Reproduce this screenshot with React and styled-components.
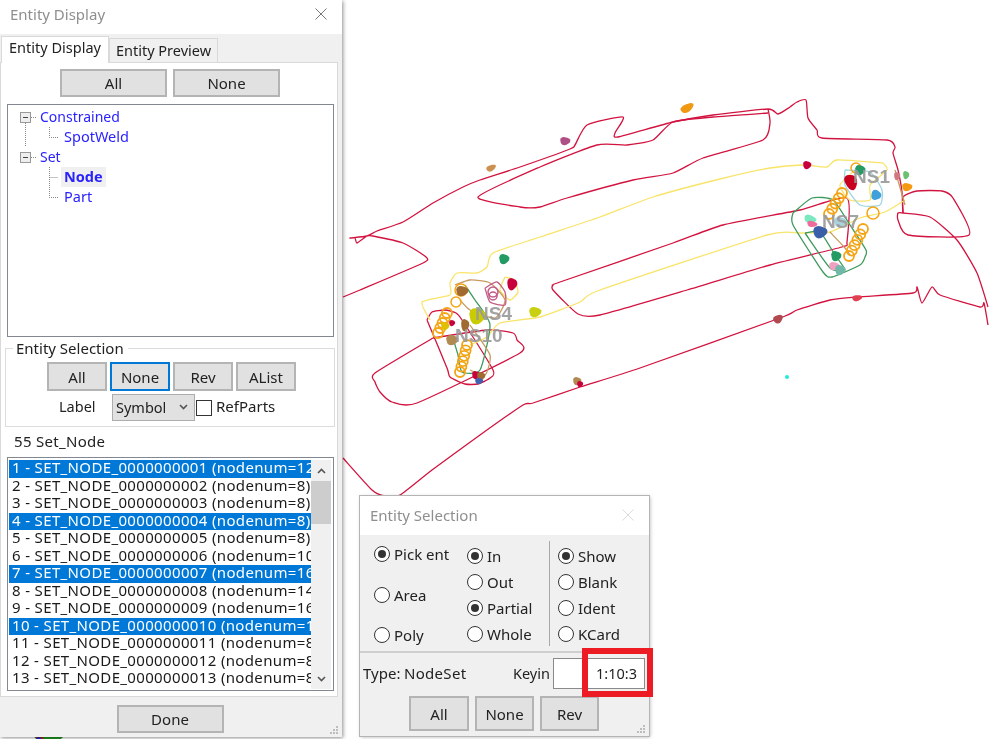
import React from 'react'
import styled, { createGlobalStyle } from 'styled-components'

const GlobalStyle = createGlobalStyle`
  html, body { margin: 0; padding: 0; background: #fff; }
  body { font-family: "Noto Sans", "Open Sans", sans-serif; font-size: 15px; color: #222; }
  * { box-sizing: border-box; }
`

const Page = styled.div`
  position: relative;
  width: 998px;
  height: 739px;
  overflow: hidden;
  background: #fff;
  filter: blur(0.3px);
`

const Scene = styled.svg`
  position: absolute;
  left: 0;
  top: 0;
  width: 998px;
  height: 739px;
`

const Window = styled.div`
  position: absolute;
  display: flex;
  flex-direction: column;
  background: #f0f0f0;
`

const DisplayWindow = styled(Window)`
  left: 0;
  top: 0;
  width: 342px;
  height: 737px;
  box-shadow: 1px 1px 4px rgba(0, 0, 0, 0.45);
`

const SelectionWindow = styled(Window)`
  left: 360px;
  top: 496px;
  width: 289px;
  height: 240px;
  box-shadow: 0 0 0 1px #b4b4b4, 1px 1px 4px rgba(0, 0, 0, 0.3);
`

const TitleBar = styled.div`
  flex: none;
  display: flex;
  align-items: center;
  justify-content: space-between;
  height: ${p => p.$height}px;
  padding: 0 15px ${p => p.$lift || 0}px 10px;
  background: #fff;
  color: #8f8f8f;
  font-size: 15px;
`

const Tabs = styled.div`
  flex: none;
  display: flex;
  align-items: flex-end;
  height: 28px;
  padding-left: 1px;
`

const Tab = styled.div`
  display: flex;
  align-items: center;
  justify-content: center;
  width: ${p => (p.$active ? 108 : 109)}px;
  height: ${p => (p.$active ? 27 : 24)}px;
  margin-bottom: ${p => (p.$active ? -1 : 0)}px;
  padding-bottom: ${p => (p.$active ? 7 : 2)}px;
  background: ${p => (p.$active ? '#fff' : '#f0f0f0')};
  border: 1px solid #d9d9d9;
  border-bottom: none;
  font-size: 14.5px;
  position: relative;
  z-index: ${p => (p.$active ? 1 : 0)};
`

const TabPanel = styled.div`
  flex: none;
  display: flex;
  flex-direction: column;
  width: 338px;
  height: 635px;
  padding: 6px 4px 0 6px;
  background: #fff;
  border: 1px solid #d9d9d9;
`

const ButtonRow = styled.div`
  display: flex;
  justify-content: center;
  gap: ${p => p.$gap}px;
`

const Button = styled.div`
  display: flex;
  align-items: center;
  justify-content: center;
  flex: none;
  width: ${p => p.$w}px;
  height: ${p => p.$h}px;
  background: #e1e1e1;
  border: 2px solid ${p => (p.$focus ? '#0078d7' : '#b4b4b4')};
  font-size: 15px;
`

const TreeBox = styled.div`
  flex: none;
  width: 327px;
  height: 233px;
  margin-top: 7px;
  padding: 2px 0 0 1px;
  background: #fff;
  border: 1px solid #828790;
`

const TreeRow = styled.div`
  display: flex;
  align-items: center;
  height: 20px;
  color: #2a22ff;
`

const TreeGuide = styled.svg`
  flex: none;
  display: block;
`

const TreeLabel = styled.span`
  padding: 0 3px;
  margin-left: ${p => (p.$root ? 0 : 3)}px;
  height: 20px;
  line-height: 19px;
  font-size: ${p => (p.$root ? 14 : 14.5)}px;
  font-weight: ${p => (p.$selected ? 700 : 400)};
  background: ${p => (p.$selected ? '#f0f0f0' : 'transparent')};
`

const Group = styled.fieldset`
  flex: none;
  width: 330px;
  height: 89px;
  margin: 1px 0 0 -2px;
  padding: 0 0 0 41px;
  border: 1px solid #dcdcdc;
  min-width: 0;
`

const GroupTitle = styled.legend`
  margin-left: -34px;
  padding: 0 4px 0 3px;
  line-height: 20px;
  font-size: 15px;
`

const SelectionRow = styled.div`
  display: flex;
  align-items: center;
  gap: ${p => p.$gap}px;
  margin-top: ${p => p.$top}px;
`

const FieldLabel = styled.span`
  width: 61px;
  padding: 0 0 3px 12px;
  font-size: 14.5px;
`

const RefLabel = styled.span`
  padding-bottom: 3px;
`

const Dropdown = styled.div`
  display: flex;
  align-items: center;
  justify-content: space-between;
  width: 83px;
  height: 27px;
  padding: 0 6px 1px 3px;
  background: #e1e1e1;
  border: 1px solid #adadad;
  font-size: 14.5px;
`

const CheckBox = styled.span`
  display: block;
  flex: none;
  width: 16px;
  height: 16px;
  margin-left: -3px;
  background: #fff;
  border: 1px solid #333;
`

const SetCount = styled.div`
  flex: none;
  height: 20px;
  margin-top: 4px;
  padding-left: 7px;
  line-height: 20px;
  font-size: 15px;
  letter-spacing: 0.3px;
`

const ListBox = styled.div`
  flex: none;
  display: flex;
  width: 327px;
  height: 234px;
  margin-top: 6px;
  padding: 2px 2px 0 1px;
  background: #fff;
  border: 1px solid #828790;
`

const Items = styled.div`
  flex: none;
  width: 302px;
  overflow: hidden;
`

const Item = styled.div`
  height: 17.5px;
  padding-left: 3px;
  line-height: 15px;
  white-space: nowrap;
  overflow: hidden;
  font-size: 15px;
  letter-spacing: 0.35px;
  background: ${p => (p.$selected ? '#0078d7' : 'transparent')};
  color: ${p => (p.$selected ? '#fff' : '#1a1a1a')};
`

const ScrollBar = styled.div`
  flex: none;
  display: flex;
  flex-direction: column;
  align-items: center;
  width: 20px;
  height: 229px;
  background: #f0f0f0;
`

const ScrollButton = styled.div`
  flex: none;
  display: flex;
  align-items: center;
  justify-content: center;
  width: 100%;
  height: ${p => p.$h}px;
`

const ScrollThumb = styled.div`
  flex: none;
  width: 100%;
  height: 43px;
  background: #cdcdcd;
`

const ScrollTrack = styled.div`
  flex: 1;
`

const Footer = styled.div`
  position: relative;
  flex: 1;
  display: flex;
  justify-content: center;
  padding: 8px 2px 0 0;
`

const Grip = styled.svg`
  position: absolute;
  right: 3px;
  bottom: 2px;
`

const Options = styled.div`
  flex: none;
  display: flex;
  height: 119px;
  border-top: 1px solid #fff;
  border-bottom: 2px solid #cfcfcf;
`

const OptionColumn = styled.div`
  display: flex;
  flex-direction: column;
  flex: none;
  width: ${p => p.$w}px;
  padding: ${p => p.$pad};
  justify-content: ${p => p.$justify || 'flex-start'};
  gap: ${p => p.$gap || 0}px;
  border-left: ${p => (p.$divider ? '1px solid #a8a8a8' : 'none')};
  margin: ${p => (p.$divider ? '6px 0 5px' : '0')};
`

const Option = styled.div`
  display: flex;
  align-items: center;
  gap: 4px;
  height: 20px;
  font-size: 15px;
`

const Radio = styled.span`
  display: flex;
  align-items: center;
  justify-content: center;
  flex: none;
  width: 16px;
  height: 16px;
  background: #fff;
  border: 1px solid #333;
  border-radius: 50%;
  &::after {
    content: '';
    display: ${p => (p.$on ? 'block' : 'none')};
    width: 8px;
    height: 8px;
    border-radius: 50%;
    background: #333;
  }
`

const KeyRow = styled.div`
  flex: none;
  display: flex;
  align-items: center;
  height: 37px;
  padding: 3px 3px 0 3px;
  font-size: 14.5px;
`

const TypeLabel = styled.span`
  width: 41px;
  font-size: 15px;
`

const TypeValue = styled.span`
  width: 109px;
  font-size: 15px;
  letter-spacing: 0.3px;
`

const KeyinInput = styled.div`
  width: 92px;
  height: 31px;
  margin-left: 3px;
  padding-right: 7px;
  line-height: 29px;
  text-align: right;
  background: #fff;
  border: 1px solid #8a8a8a;
`

const Highlight = styled.div`
  position: absolute;
  left: 222px;
  top: 152px;
  width: 71px;
  height: 49px;
  border: 6px solid #ed1c24;
`

const BottomButtons = styled.div`
  flex: none;
  display: flex;
  gap: 6px;
  padding: 6px 0 0 49px;
`

const treeRows = [
  { label: 'Constrained', guide: 'rootFirst' },
  { label: 'SpotWeld', guide: 'childOfFirst' },
  { label: 'Set', guide: 'rootLast' },
  { label: 'Node', guide: 'childFirst', selected: true },
  { label: 'Part', guide: 'childLast' },
]

const selected = [1, 4, 7, 10]
const nodeCounts = [12, 8, 8, 8, 8, 10, 16, 14, 16, 12, 8, 8, 8]

const Expander = () => (
  <g>
    <rect x="11.5" y="5.5" width="10" height="10" fill="#eee" stroke="#999" />
    <path d="M14 10.5h5" stroke="#444" />
    <path d="M22 10.5h6" stroke="#888" strokeDasharray="1 1" />
  </g>
)

// the dotted connector lines of the tree, one small drawing per row
const Guide = ({ kind }) => {
  const root = kind === 'rootFirst' || kind === 'rootLast'
  return (
    <TreeGuide width={root ? 28 : 49} height="20">
      {root && <Expander />}
      {kind === 'rootFirst' && <path d="M16.5 16v4" stroke="#888" strokeDasharray="1 1" />}
      {kind === 'childOfFirst' && (
        <path d="M16.5 0v20M40.5 0v10.5h10" fill="none" stroke="#888" strokeDasharray="1 1" />
      )}
      {kind === 'childFirst' && (
        <path d="M40.5 0v20M40.5 10.5h10" fill="none" stroke="#888" strokeDasharray="1 1" />
      )}
      {kind === 'childLast' && (
        <path d="M40.5 0v10.5h10" fill="none" stroke="#888" strokeDasharray="1 1" />
      )}
    </TreeGuide>
  )
}

const Close = ({ color, size }) => (
  <svg width={size} height={size} viewBox="0 0 12 12">
    <path d="M0.5 0.5l11 11M11.5 0.5l-11 11" stroke={color} fill="none" />
  </svg>
)

const Chevron = ({ up, color = '#555', w = 9 }) => (
  <svg width={w} height="6" viewBox="0 0 9 6">
    <path d={up ? 'M1 5l3.5-3.5L8 5' : 'M1 1l3.5 3.5L8 1'} stroke={color} strokeWidth="1.6" fill="none" />
  </svg>
)

const GripDots = () => (
  <Grip width="10" height="10" viewBox="0 0 10 10">
    <path d="M7 1h2v2H7zM4 4h2v2H4zM7 4h2v2H7zM1 7h2v2H1zM4 7h2v2H4zM7 7h2v2H7z" fill="#bdbdbd" />
  </Grip>
)

const RED = '#d2133f'
const YELLOW = '#f9e46a'
const GREEN = '#3c9a5c'
const TAN = '#c89a60'
const PURPLE = '#c45a86'
const ORANGE = '#f4a516'

// outlines of the model, as flat x y lists
const lines = [
  [RED, [343, 297, 360, 290, 423, 263, 426, 257, 403, 243, 373, 236, 367, 236, 357, 243, 355, 238, 350, 238, 367, 236, 377, 231, 403, 222, 433, 203, 463, 187, 480, 180, 520, 167, 570, 149, 575, 145, 587, 125, 623, 117, 615, 133, 618, 137, 673, 122, 713, 115, 768, 109, 778, 114, 790, 107, 797, 102, 806, 100, 808, 118, 817, 130, 822, 138, 887, 140, 895, 147, 893, 153, 898, 170, 902, 192, 903, 213]],
  [RED, [768, 109, 770, 123, 763, 140, 703, 158, 673, 173, 633, 180, 567, 198, 540, 207, 520, 207, 478, 197, 540, 167, 597, 145, 627, 145, 653, 140, 673, 122, 713, 117, 768, 113]],
  [RED, [553, 285, 560, 282, 673, 243, 723, 225, 800, 210, 847, 198, 847, 242, 842, 247, 770, 265, 687, 290, 600, 315, 578, 314, 553, 290, 553, 285]],
  [RED, [433, 338, 375, 373, 375, 382, 380, 392, 392, 402, 417, 403, 520, 353, 517, 340, 513, 333, 487, 330, 433, 338]],
  [RED, [427, 320, 432, 312, 445, 310, 456, 313, 462, 320, 493, 370, 490, 378, 478, 384, 465, 384, 450, 377, 447, 368, 427, 320]],
  [RED, [343, 458, 372, 490, 385, 496, 400, 495, 432, 470, 480, 435, 523, 405, 533, 403, 580, 387, 640, 368, 780, 318, 797, 310, 830, 300, 857, 297, 913, 293, 917, 287, 922, 303, 932, 287, 940, 295, 980, 307, 984, 303, 988, 325]],
  [RED, [903, 213, 903, 197, 917, 191, 942, 191, 953, 198, 969, 235, 908, 235, 898, 220, 898, 213, 903, 213, 930, 217, 957, 240, 977, 273, 988, 307]],
  [YELLOW, [883, 163, 837, 160, 827, 167, 803, 165, 770, 168, 720, 179, 653, 197, 600, 217, 540, 237, 493, 253, 487, 267, 477, 273, 457, 273, 450, 283, 450, 295, 422, 302, 430, 320]],
  [YELLOW, [905, 200, 885, 212, 860, 218, 830, 232, 800, 233, 767, 235, 600, 290, 580, 302, 540, 317, 500, 323, 487, 337, 470, 345]],
  [YELLOW, [883, 163, 887, 170, 870, 185, 870, 200, 850, 200, 840, 185, 855, 170]],
  [YELLOW, [505, 277, 514, 280, 518, 292, 510, 300, 500, 290, 505, 277]],
  [GREEN, [793, 213, 812, 198, 833, 200, 850, 225, 866, 250, 865, 257, 860, 265, 832, 277, 823, 272, 793, 225, 793, 213]],
  [GREEN, [805, 233, 820, 232, 835, 255, 845, 270, 830, 268, 805, 233]],
  [GREEN, [465, 285, 475, 300, 490, 325, 480, 370, 462, 372, 458, 355, 452, 335]],
  [TAN, [455, 285, 470, 280, 490, 283, 505, 300, 495, 318, 470, 310, 460, 300]],
  [TAN, [470, 325, 490, 355, 485, 375, 470, 370]],
  [TAN, [830, 232, 845, 248, 850, 255]],
  [TAN, [895, 170, 905, 205]],
  [PURPLE, [485, 288, 497, 282, 505, 292, 505, 305, 490, 302, 485, 288]],
  ['#9fd6e2', [845, 170, 870, 172, 882, 190, 880, 205, 860, 205, 845, 185, 845, 170]],
]

const rings = [
  { x: 493, y: 292, r: 5, c: PURPLE },
  { x: 493, y: 296, r: 4, c: PURPLE },
  { x: 456, y: 302, r: 5, c: ORANGE },
  { x: 461, y: 290, r: 6, c: ORANGE },
  { x: 873, y: 213, r: 6, c: ORANGE },
  { x: 856, y: 168, r: 5, c: ORANGE },
]

const chains = [
  [447, 313, 438, 333, 5],
  [467, 345, 460, 372, 6],
  [842, 193, 829, 214, 5],
  [863, 229, 849, 256, 6],
]

const blobs = [
  [687, 108, 7, 4, '#ef9a12', -30],
  [565, 141, 5, 4, '#ae5085', 0],
  [491, 168, 5, 3, '#cc9050', -25],
  [504, 259, 5, 5, '#239b64', 0],
  [512, 284, 5, 6, '#c8003c', 0],
  [462, 291, 6, 5, '#a06a30', 0],
  [477, 316, 8, 8, '#c8cc00', 0],
  [535, 312, 6, 5, '#c8d010', 0],
  [452, 340, 6, 5, '#b08a50', 0],
  [465, 325, 4, 6, '#a06a30', 0],
  [452, 323, 3, 3, '#c8003c', 0],
  [445, 326, 4, 4, '#e0c000', 0],
  [476, 375, 4, 4, '#c8003c', 0],
  [481, 376, 4, 4, '#a06a30', 0],
  [479, 381, 4, 3, '#4060b0', 0],
  [577, 381, 4, 4, '#b08a50', 0],
  [580, 384, 3, 3, '#c8003c', 0],
  [807, 165, 4, 4, '#c8003c', 0],
  [851, 182, 6, 8, '#c8001e', -25],
  [860, 170, 5, 5, '#239b64', 0],
  [876, 195, 5, 5, '#40a0dc', 20],
  [907, 187, 5, 4, '#f59a10', 0],
  [906, 175, 3, 4, '#6cc070', 0],
  [897, 176, 3, 4, '#d07a80', 0],
  [810, 219, 6, 4, '#7ce8c0', 15],
  [812, 224, 5, 3, '#f06a9a', 10],
  [820, 232, 7, 6, '#3a5fa8', 0],
  [840, 222, 6, 5, '#a8d2e0', 0],
  [836, 256, 5, 5, '#239b64', 0],
  [834, 266, 5, 4, '#f0a0c0', 0],
  [840, 270, 5, 5, '#70b8a8', 0],
  [857, 298, 5, 3, '#e04050', -10],
  [778, 319, 5, 4, '#b04a50', -30],
]

const labels = [
  ['NS4', 475, 320],
  ['NS10', 455, 342],
  ['NS1', 853, 183],
  ['NS7', 822, 228],
]

const chainPoints = ([x1, y1, x2, y2, n]) =>
  Array.from({ length: n }, (_, i) => [x1 + ((x2 - x1) * i) / (n - 1), y1 + ((y2 - y1) * i) / (n - 1)])

// light catmull-rom smoothing so the outlines don't look like ruler lines
const smooth = flat => {
  const pts = []
  for (let i = 0; i < flat.length; i += 2) pts.push([flat[i], flat[i + 1]])
  let d = `M${pts[0][0]} ${pts[0][1]}`
  for (let i = 0; i < pts.length - 1; i++) {
    const a = pts[Math.max(i - 1, 0)]
    const b = pts[i]
    const c = pts[i + 1]
    const e = pts[Math.min(i + 2, pts.length - 1)]
    const k = 0.1
    d += `C${b[0] + (c[0] - a[0]) * k} ${b[1] + (c[1] - a[1]) * k} ${c[0] - (e[0] - b[0]) * k} ${c[1] - (e[1] - b[1]) * k} ${c[0]} ${c[1]}`
  }
  return d
}

// ragged little patch of mesh
const blobPoints = (rx, ry) =>
  Array.from({ length: 18 }, (_, i) => {
    const t = (i / 18) * Math.PI * 2
    const m = 1 + 0.09 * Math.cos(t * 3 + 0.6)
    return `${(Math.cos(t) * rx * m).toFixed(1)},${(Math.sin(t) * ry * m).toFixed(1)}`
  }).join(' ')

const Model = () => (
  <Scene viewBox="0 0 998 739">
    {lines.map(([c, pts], i) => (
      <path key={i} d={smooth(pts)} fill="none" stroke={c} strokeWidth="1.3" strokeLinejoin="round" />
    ))}
    {rings.map((r, i) => (
      <circle key={i} cx={r.x} cy={r.y} r={r.r} fill="none" stroke={r.c} strokeWidth="1.5" />
    ))}
    {chains.map((c, i) =>
      chainPoints(c).map(([x, y], j) => (
        <circle key={`${i}-${j}`} cx={x} cy={y} r="5" fill="none" stroke={ORANGE} strokeWidth="1.8" />
      ))
    )}
    {blobs.map(([x, y, rx, ry, c, rot], i) => (
      <polygon key={i} points={blobPoints(rx, ry)} fill={c} transform={`translate(${x} ${y}) rotate(${rot})`} />
    ))}
    <circle cx="787" cy="377" r="2" fill="#25e8e0" />
    {labels.map(([t, x, y]) => (
      <text key={t} x={x} y={y} fill="#9a9a9a" opacity="0.9" fontFamily="Liberation Sans, sans-serif" fontWeight="700" fontSize="19">
        {t}
      </text>
    ))}
    <path d="M33 735l10 0 l6 2 l16-2 l-4 4H36z" fill="#1f9a20" />
    <path d="M30 734l8 5h6l-4-5z" fill="#c81e1e" />
    <path d="M38 736l4 3h-6z" fill="#2030c0" />
  </Scene>
)

const listItems = nodeCounts.map((n, i) => {
  const id = i + 1
  return { id, text: `${id} - SET_NODE_${String(id).padStart(10, '0')} (nodenum=${n})` }
})

const App = () => (
  <Page>
    <GlobalStyle />
    <Model />

    <DisplayWindow>
      <TitleBar $height={34} $lift={6}>
        Entity Display
        <Close color="#777" size={12} />
      </TitleBar>
      <Tabs>
        <Tab $active>Entity Display</Tab>
        <Tab>Entity Preview</Tab>
      </Tabs>
      <TabPanel>
        <ButtonRow $gap={6}>
          <Button $w={107} $h={28}>All</Button>
          <Button $w={107} $h={28}>None</Button>
        </ButtonRow>
        <TreeBox>
          {treeRows.map(r => (
            <TreeRow key={r.label}>
              <Guide kind={r.guide} />
              <TreeLabel $selected={r.selected} $root={r.guide.startsWith('root')}>{r.label}</TreeLabel>
            </TreeRow>
          ))}
        </TreeBox>
        <Group>
          <GroupTitle>Entity Selection</GroupTitle>
          <SelectionRow $gap={3} $top={4}>
            <Button $w={60} $h={29}>All</Button>
            <Button $w={60} $h={29} $focus>None</Button>
            <Button $w={60} $h={29}>Rev</Button>
            <Button $w={60} $h={29}>AList</Button>
          </SelectionRow>
          <SelectionRow $gap={4} $top={3}>
            <FieldLabel>Label</FieldLabel>
            <Dropdown>
              Symbol
              <Chevron />
            </Dropdown>
            <CheckBox />
            <RefLabel>RefParts</RefLabel>
          </SelectionRow>
        </Group>
        <SetCount>55 Set_Node</SetCount>
        <ListBox>
          <Items>
            {listItems.map(item => (
              <Item key={item.id} $selected={selected.includes(item.id)}>{item.text}</Item>
            ))}
          </Items>
          <ScrollBar>
            <ScrollButton $h={21}><Chevron up /></ScrollButton>
            <ScrollThumb />
            <ScrollTrack />
            <ScrollButton $h={21}><Chevron /></ScrollButton>
          </ScrollBar>
        </ListBox>
      </TabPanel>
      <Footer>
        <Button $w={107} $h={28}>Done</Button>
        <GripDots />
      </Footer>
    </DisplayWindow>

    <SelectionWindow>
      <TitleBar $height={38}>
        Entity Selection
        <Close color="#dcdcdc" size={12} />
      </TitleBar>
      <Options>
        <OptionColumn $w={107} $pad="9px 0 6px 14px" $justify="space-between">
          <Option><Radio $on />Pick ent</Option>
          <Option><Radio />Area</Option>
          <Option><Radio />Poly</Option>
        </OptionColumn>
        <OptionColumn $w={82} $pad="11px 0 0 0" $gap={6}>
          <Option><Radio $on />In</Option>
          <Option><Radio />Out</Option>
          <Option><Radio $on />Partial</Option>
          <Option><Radio />Whole</Option>
        </OptionColumn>
        <OptionColumn $w={95} $divider $pad="5px 0 0 8px" $gap={6}>
          <Option><Radio $on />Show</Option>
          <Option><Radio />Blank</Option>
          <Option><Radio />Ident</Option>
          <Option><Radio />KCard</Option>
        </OptionColumn>
      </Options>
      <KeyRow>
        <TypeLabel>Type:</TypeLabel>
        <TypeValue>NodeSet</TypeValue>
        <span>Keyin</span>
        <KeyinInput>1:10:3</KeyinInput>
      </KeyRow>
      <BottomButtons>
        <Button $w={60} $h={35}>All</Button>
        <Button $w={59} $h={35}>None</Button>
        <Button $w={59} $h={35}>Rev</Button>
      </BottomButtons>
      <GripDots />
      <Highlight />
    </SelectionWindow>
  </Page>
)

export default App
